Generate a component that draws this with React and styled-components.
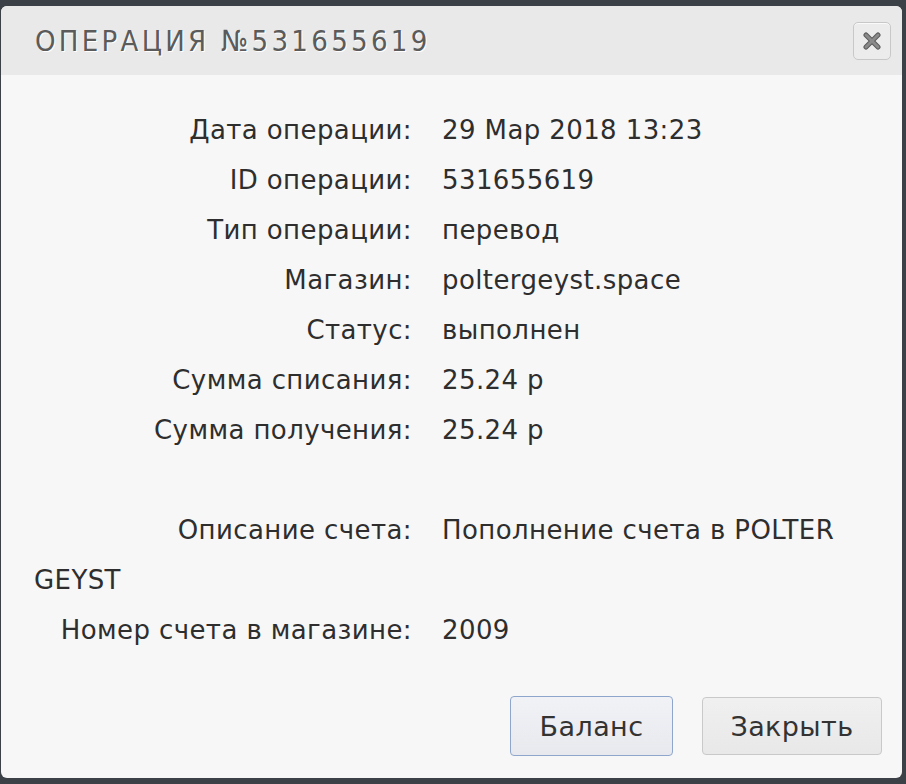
import React from 'react';
import styled, { createGlobalStyle } from 'styled-components';

const Global = createGlobalStyle`
  html, body {
    margin: 0;
    padding: 0;
    background: #3c4148;
  }
  body {
    font-family: "DejaVu Sans", "Liberation Sans", sans-serif;
  }
`;

const Page = styled.div`
  width: 906px;
  height: 784px;
  padding: 6px 4px 0 1px;
  box-sizing: border-box;
`;

const Dialog = styled.div`
  width: 901px;
  height: 772px;
  background: #f7f7f7;
  border-radius: 6px;
  overflow: hidden;
  display: flex;
  flex-direction: column;
`;

const Header = styled.div`
  height: 69px;
  flex: none;
  background: #e9e9e9;
  display: flex;
  align-items: center;
  justify-content: space-between;
  padding: 0 11px 0 34px;
  box-sizing: border-box;
`;

const Title = styled.h1`
  margin: 0;
  font-family: "DejaVu Sans Condensed", "DejaVu Sans", sans-serif;
  font-weight: normal;
  font-size: 29px;
  letter-spacing: 3.3px;
  color: #5b5b5b;
  text-shadow: 1px 1px 0 #ffffff;
`;

const CloseButton = styled.button`
  width: 38px;
  height: 38px;
  border: 1px solid #c8c8c8;
  border-radius: 5px;
  background: #ececec;
  display: flex;
  align-items: center;
  justify-content: center;
  padding: 0;
  box-shadow: inset 0 1px 0 #fafafa;
`;

const Body = styled.div`
  flex: 1;
  padding: 30px 30px 0 33px;
  font-size: 26px;
  letter-spacing: 0.4px;
  color: #2e2e2e;
`;

const Row = styled.div`
  line-height: 50px;
  min-height: 50px;
`;

const Label = styled.span`
  display: inline-block;
  width: 378px;
  text-align: right;
  margin-right: 30px;
`;

const Value = styled.span``;

const Footer = styled.div`
  display: flex;
  justify-content: flex-end;
  gap: 29px;
  padding: 0 20px 22px 0;
`;

const Button = styled.button`
  height: ${p => (p.$primary ? '60px' : '58px')};
  width: ${p => (p.$primary ? '163px' : '180px')};
  margin-top: ${p => (p.$primary ? '0' : '1px')};
  border-radius: 4px;
  border: 1px solid ${p => (p.$primary ? '#8fa6cc' : '#c9c9c9')};
  background: ${p => (p.$primary
    ? 'linear-gradient(#f1f2f6, #e7e9ee)'
    : 'linear-gradient(#f0f0f0, #e8e8e8)')};
  font-family: "DejaVu Sans", sans-serif;
  font-size: 27px;
  letter-spacing: 0.4px;
  color: #333;
  padding: 0;
`;

const rows = [
  ['Дата операции:', '29 Мар 2018 13:23'],
  ['ID операции:', '531655619'],
  ['Тип операции:', 'перевод'],
  ['Магазин:', 'poltergeyst.space'],
  ['Статус:', 'выполнен'],
  ['Сумма списания:', '25.24 р'],
  ['Сумма получения:', '25.24 р'],
  null,
  ['Описание счета:', 'Пополнение счета в POLTER GEYST'],
  ['Номер счета в магазине:', '2009'],
];

export default function App() {
  return (
    <Page>
      <Global />
      <Dialog>
        <Header>
          <Title>ОПЕРАЦИЯ №531655619</Title>
          <CloseButton aria-label="close">
            <svg width="18" height="18" viewBox="0 0 18 18">
              <path d="M3 3 L15 15 M15 3 L3 15" stroke="#5a5a5a" strokeWidth="5" strokeLinecap="round" />
              <path d="M3 3 L15 15 M15 3 L3 15" stroke="#8a8a8a" strokeWidth="3" strokeLinecap="round" />
            </svg>
          </CloseButton>
        </Header>
        <Body>
          {rows.map((r, i) =>
            r ? (
              <Row key={i}>
                <Label>{r[0]}</Label>
                <Value>{r[1]}</Value>
              </Row>
            ) : (
              <Row key={i} />
            )
          )}
        </Body>
        <Footer>
          <Button $primary>Баланс</Button>
          <Button>Закрыть</Button>
        </Footer>
      </Dialog>
    </Page>
  );
}
